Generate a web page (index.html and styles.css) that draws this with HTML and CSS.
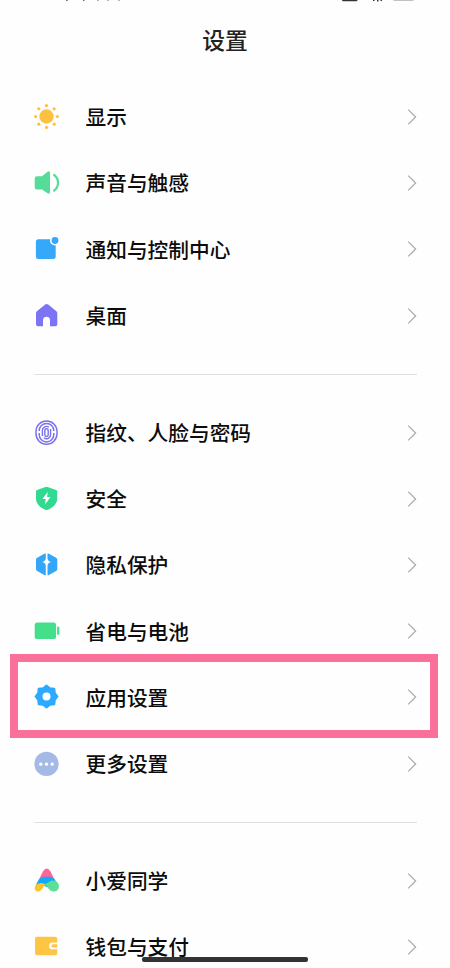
FILE: index.html
```html
<!DOCTYPE html>
<html lang="zh-CN">
<head>
<meta charset="utf-8">
<title>设置</title>
<link rel="stylesheet" href="styles.css">
</head>
<body>
<svg width="0" height="0" class="defs"><defs><symbol id="chev" viewBox="0 0 10 18"><path d="M1.200 1.600 8.600 9 1.200 16.400" fill="none" stroke="#adadad" stroke-width="1.3"/></symbol></defs></svg>
<main class="screen">
  <header class="header">
    <svg class="status" viewBox="0 0 450 3"><g fill="#333"><path d="M66 0h2l-.5 1h-1.500zM83 0h1.500v1H83zM97 0h2v.6h-2zM107 0h2v.6h-2zM118 0h2v.6h-2z" opacity=".7"/><path d="M342 0h15.500v.4l-1 .8h-13.500l-1-.8z"/><path d="M373 0h1.500v1H373zM377 0h1.500v1.500H377zM380.500 0h1.500v1h-1.500z"/><path d="M393 0h21l-1 .8h-19z" opacity=".4"/></g></svg>
    <h1 class="title">设置</h1>
  </header>
  <section class="group">
    <div class="row"><svg class="icon" viewBox="-0.5 0 28 28"><g fill="#fec13d"><circle cx="14" cy="13.500" r="7.200"/><circle cx="14" cy="2.600" r="1.600"/><circle cx="14" cy="24.400" r="1.600"/><circle cx="3.100" cy="13.500" r="1.600"/><circle cx="24.900" cy="13.500" r="1.600"/><circle cx="6.300" cy="5.800" r="1.600"/><circle cx="21.700" cy="5.800" r="1.600"/><circle cx="6.300" cy="21.200" r="1.600"/><circle cx="21.700" cy="21.200" r="1.600"/></g></svg><span class="label">显示</span><svg class="chev"><use href="#chev"/></svg></div>
    <div class="row"><svg class="icon" viewBox="-0.5 0 28 28"><path d="M4.500 7.200H9.500L15 2.700Q17.500 1.300 17.500 4v19q0 2.700-2.500 1.300L9.500 20.500H4.500Q2.200 20.500 2.200 18.200V9.500Q2.200 7.200 4.500 7.200z" fill="#56dc98"/><path d="M21.600 6c5.200 3.700 5.200 12 0 15.700" fill="none" stroke="#56dc98" stroke-width="2.200" stroke-linecap="round"/></svg><span class="label">声音与触感</span><svg class="chev"><use href="#chev"/></svg></div>
    <div class="row"><svg class="icon" viewBox="-0.5 0 28 28"><rect x="3.400" y="4.300" width="19.800" height="19.800" rx="2.500" fill="#35a8f9"/><circle cx="22.500" cy="5.500" r="5" fill="#fefefe"/><circle cx="22.500" cy="5.500" r="3.400" fill="#35a8f9"/></svg><span class="label">通知与控制中心</span><svg class="chev"><use href="#chev"/></svg></div>
    <div class="row"><svg class="icon" viewBox="-0.5 0 28 28"><path d="M4.400 9.300 12.700 2.500q1.500-1 3 0l8.200 6.800q.9.800.9 2v10.900q0 2-2 2H17.500v-6a3.500 3.500 0 0 0-7 0v6H5.500q-2 0-2-2V11.300q0-1.200.9-2z" fill="#7d74f5"/></svg><span class="label">桌面</span><svg class="chev"><use href="#chev"/></svg></div>
  </section>
  <hr class="divider">
  <section class="group">
    <div class="row"><svg class="icon" viewBox="-0.5 0 28 28"><g fill="none" stroke="#7b72ec"><rect x="3.500" y="1.900" width="21" height="23.400" rx="10.500" stroke-width="1.500"/><path d="M6.700 11.900v-.2a7.300 7.300 0 0 1 14.600 0v.2M6.700 14v1.600a7.300 7.300 0 0 0 14.600 0V14" stroke-width="1.500"/><path d="M9.900 17.100v-5.500a4.100 4.100 0 0 1 6.600-3.300M18.100 10.100v5.500a4.100 4.100 0 0 1-6.600 3.300" stroke-width="1.400"/><rect x="12.300" y="9.700" width="3.400" height="7.800" rx="1.700" stroke-width="1.400"/></g></svg><span class="label">指纹、人脸与密码</span><svg class="chev"><use href="#chev"/></svg></div>
    <div class="row"><svg class="icon" viewBox="-0.5 0 28 28"><path d="M13 2q1-.5 2 0L23.700 4.900q1 .4 1 1.500v7.300c0 5-4.200 8.800-9.400 11.100q-1.200.5-2.400 0C7.700 22.500 3.500 18.700 3.500 13.700V6.400q0-1.100 1-1.500z" fill="#31d991"/><path d="M15.200 7 9.900 14.100h3.300l-.7 5.400 5.500-7.500h-3.400z" fill="#fff"/></svg><span class="label">安全</span><svg class="chev"><use href="#chev"/></svg></div>
    <div class="row"><svg class="icon" viewBox="-0.5 0 28 28"><path d="M13.300 2.600v4.900q-.4 2.900-3.600 3.600 3.200.7 3.600 3.600v9.400q-.8.200-1.500-.2L4.700 20.100q-1.200-.7-1.200-2V8.700q0-1.300 1.200-2l7.100-3.900q.7-.4 1.500-.2zM15 2.600v4.900q.4 2.900 3.600 3.600-3.200.7-3.600 3.600v9.400q.8.200 1.500-.2l7.100-3.800q1.200-.7 1.200-2V8.700q0-1.300-1.200-2l-7.100-3.900q-.7-.4-1.500-.2z" fill="#34a6fa"/></svg><span class="label">隐私保护</span><svg class="chev"><use href="#chev"/></svg></div>
    <div class="row"><svg class="icon" viewBox="-0.5 0 28 28"><g fill="#43df8b"><rect x="2.200" y="5.500" width="21.400" height="16.500" rx="2.600"/><rect x="24.600" y="9.500" width="2.200" height="8.400" rx="1.100"/></g></svg><span class="label">省电与电池</span><svg class="chev"><use href="#chev"/></svg></div>
    <div class="row marked"><svg class="icon" viewBox="-0.5 0 28 28"><path d="M11 0 8.300 3.400 7.800 7.800 3.400 8.300 0 11-3.400 8.300-7.800 7.800-8.300 3.400-11 0-8.300-3.400-7.800-7.800-3.400-8.300 0-11 3.400-8.300 7.800-7.800 8.300-3.400z" fill="#2daaff" stroke="#2daaff" stroke-width="2" stroke-linejoin="round" transform="translate(14 13.500)"/><circle cx="14" cy="13.500" r="4" fill="#fff"/></svg><span class="label">应用设置</span><svg class="chev"><use href="#chev"/></svg></div>
    <div class="row"><svg class="icon" viewBox="-0.5 0 28 28"><circle cx="14" cy="13.900" r="12.100" fill="#a4b9e6"/><g fill="#fff"><circle cx="8.300" cy="14.200" r="1.600"/><circle cx="14" cy="14.200" r="1.600"/><circle cx="19.700" cy="14.200" r="1.600"/></g></svg><span class="label">更多设置</span><svg class="chev"><use href="#chev"/></svg></div>
  </section>
  <hr class="divider">
  <section class="group">
    <div class="row"><svg class="icon" viewBox="-0.5 0 28 28"><path d="M6.300 13 10.500 4.200q3.700-5.400 7.400 0l5 10.300-8-2.500z" fill="#fb6598"/><path d="M3 18.400 6.300 12.500c3-3.700 12-4.500 16-.2l2.500 5.200-11 2.500-4-3z" fill="#12aaf8"/><path d="M10.500 17c4.500.3 6-3.300 9.500-3.600 4.500-.2 6.600 3.200 6.500 6.300-.2 3.600-3.500 5.300-6.700 4.500-4.300-1-4.700-5.900-9.300-7.200z" fill="#5ddf9a"/><path d="M12.500 16.900Q7.500 14.900 3.700 17.600 1.500 20.300 2.300 22.500q1.900 3 5.600 1.200Q9.700 22.300 12.500 16.900z" fill="#fdc329"/></svg><span class="label">小爱同学</span><svg class="chev"><use href="#chev"/></svg></div>
    <div class="row"><svg class="icon" viewBox="-0.5 0 28 28"><rect x="2.500" y="3.700" width="22.200" height="18.500" rx="2" fill="#fec443"/><path d="M25 9.500h-5a3.400 3.400 0 0 0 0 6.800h5v-1.800h-4.500a1.500 1.500 0 0 1 0-3.200H25z" fill="#fff"/></svg><span class="label">钱包与支付</span><svg class="chev"><use href="#chev"/></svg></div>
  </section>
  <div class="home-bar"></div>
</main>
</body>
</html>
```
FILE: styles.css
```css
*, *::before, *::after { box-sizing: border-box; }
body { margin: 0; background: #fefefe; }
.defs { position: absolute; }
.screen {
  position: relative;
  width: 450px;
  height: 968px;
  overflow: hidden;
  background: #fefefe;
  font-family: "Noto Sans CJK SC", sans-serif;
  color: #0c0c0c;
}
.header { height: 84px; }
.status { display: block; width: 450px; height: 3px; }
.title {
  margin: 0;
  height: 74px;
  line-height: 74px;
  text-align: center;
  font-size: 22.8px;
  font-weight: 500;
  color: #222;
}
.row {
  position: relative;
  display: flex;
  align-items: center;
  height: 66.2px;
  padding: 0 33px 0 32px;
}
.icon { width: 28px; height: 28px; flex: none; }
.label {
  flex: 1;
  margin-left: 25.500px;
  padding-bottom: 1.600px;
  font-size: 20.7px;
  line-height: 30px;
  font-weight: 500;
  white-space: nowrap;
}
.chev { width: 10px; height: 18px; flex: none; }
.divider {
  height: 1px;
  margin: 24.900px 33px 25px 34px;
  border: 0;
  background: #e0e0e0;
}
.marked::after {
  content: "";
  position: absolute;
  left: 9.500px;
  top: -10.800px;
  width: 428px;
  height: 84px;
  border: 8px solid #fa7099;
}
.home-bar {
  position: absolute;
  left: 142px;
  top: 957px;
  width: 166px;
  height: 4.500px;
  border-radius: 2px;
  background: #333;
}
```
